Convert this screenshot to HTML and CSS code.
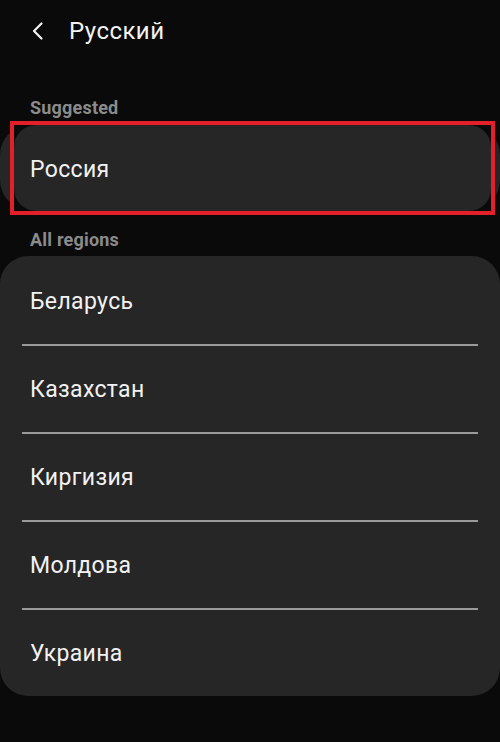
FILE: index.html
```html
<!DOCTYPE html>
<html lang="ru">

<head>
    <meta charset="UTF-8" />
    <meta name="viewport" content="width=device-width, initial-scale=1.0" />
    <title>Русский</title>
    <link rel="stylesheet" href="styles.css">
</head>

<body>

    <!-- 상단 -->
    <header class="top-bar">
        <svg class="back" width="14" height="20" viewBox="0 0 14 20">
            <path d="M10.5 2.5 L3 10 L10.5 17.5" fill="none" stroke="#f2f2f2" stroke-width="2.2" stroke-linecap="round" stroke-linejoin="round" />
        </svg>
        <h1 class="title">Русский</h1>
    </header>

    <div class="label label-first">Suggested</div>
    <div class="suggest-card">
        <div class="highlight">
            <div class="item item-single">Россия</div>
        </div>
    </div>

    <div class="label label-second">All regions</div>
    <ul class="list-card">
        <li class="item">Беларусь</li>
        <li class="item">Казахстан</li>
        <li class="item">Киргизия</li>
        <li class="item">Молдова</li>
        <li class="item">Украина</li>
    </ul>

</body>

</html>
```

FILE: styles.css
```css
body {
    margin: 0;
    padding: 0;
    background-color: #0a0a0a;
    font-family: Roboto, "Noto Sans", sans-serif;
    color: #f2f2f2;
}

.top-bar {
    height: 62px;
    display: flex;
    align-items: center;
    padding-left: 31px;
}

.back {
    display: block;
}

.title {
    margin: 0 0 0 24px;
    font-size: 24px;
    font-weight: normal;
    line-height: 28px;
    letter-spacing: 0.45px;
}

.label {
    padding-left: 30px;
    font-size: 18px;
    font-weight: bold;
    line-height: 20px;
    letter-spacing: 0.2px;
    color: #8b8b8b;
}

.label-first {
    margin-top: 36px;
}

.label-second {
    margin-top: 20px;
}

/* 추천 카드 */
.suggest-card {
    margin-top: 7px;
    height: 85px;
    background-color: #262626;
    border-radius: 30px;
    display: flex;
}

.highlight {
    flex: 1;
    margin: -4px 5px -5px 10px;
    border: 4px solid #e3202a;
    background-color: #0a0a0a;
    display: flex;
}

.item {
    display: flex;
    align-items: center;
    box-sizing: border-box;
    height: 88px;
    padding-left: 30px;
    padding-top: 2px;
    font-size: 23px;
    letter-spacing: 0.35px;
}

.item-single {
    flex: 1;
    height: auto;
    padding-left: 16px;
    background-color: #262626;
    border-radius: 22px;
}

/* 전체 목록 */
.list-card {
    list-style: none;
    margin: 6px 0 0 0;
    padding: 0;
    background-color: #262626;
    border-radius: 28px;
}

.list-card .item + .item {
    position: relative;
}

.list-card .item + .item::before {
    content: "";
    position: absolute;
    top: 0;
    left: 22px;
    right: 22px;
    height: 1.5px;
    background-color: #9a9a9a;
}
```
